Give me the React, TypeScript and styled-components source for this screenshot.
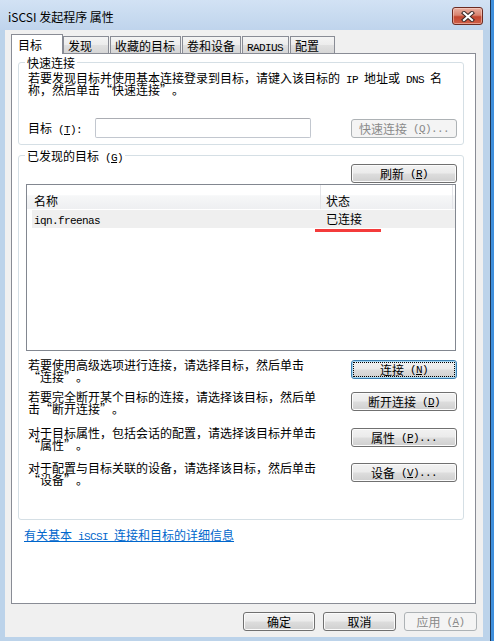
import React from "react";
import styled, { createGlobalStyle, css } from "styled-components";

const GlobalStyle = createGlobalStyle`
  * { box-sizing: border-box; }
  html, body { margin: 0; padding: 0; }
  body {
    background: #3f8fdc;
    font-family: "Noto Sans CJK SC", sans-serif;
    font-size: 12px;
    line-height: 12px;
    color: #000;
  }
`;

const Window = styled.div`
  width: 491px;
  height: 641px;
  border-right: 1px solid #1f3652;
  background: #bcd3ea;
  display: flex;
  flex-direction: column;
`;

const TitleBar = styled.div`
  height: 30px;
  flex: none;
  display: flex;
  align-items: flex-start;
  justify-content: space-between;
  padding: 0 7px 0 8px;
  background: linear-gradient(#d2e2f4, #bfd4ec);
`;

const Title = styled.div`
  margin-top: 10px;
  height: 13px;
  line-height: 13px;
`;

const CloseButton = styled.div`
  margin-top: 7px;
  width: 31px;
  height: 18px;
  border: 1px solid #6b2b22;
  border-radius: 3px;
  background: linear-gradient(#e9b0a2 0%, #d8836f 45%, #c3462f 55%, #cf5f48 100%);
  box-shadow: inset 0 0 0 1px rgba(255, 220, 210, 0.5);
  display: flex;
  align-items: center;
  justify-content: center;
`;

const Client = styled.div`
  flex: 1;
  width: 478px;
  margin: 0 0 4px 5px;
  padding: 4px 0 0 6px;
  background: #f0f0f0;
  display: flex;
  flex-direction: column;
`;

const TabStrip = styled.div`
  display: flex;
  align-items: flex-end;
`;

const Tab = styled.div<{ $w: number; $active?: boolean }>`
  position: relative;
  width: ${(p) => p.$w}px;
  border: 1px solid #898c95;
  border-bottom: none;
  white-space: nowrap;
  ${(p) =>
    p.$active
      ? css`
          z-index: 1;
          height: 20px;
          margin-bottom: -1px;
          padding: 4px 0 0 6px;
          background: #fff;
        `
      : css`
          height: 17px;
          margin-right: 1px;
          padding: 3px 0 0 4px;
          background: linear-gradient(#f4f4f4 0%, #ececec 50%, #e0e0e0 51%, #d6d6d6 100%);
        `}
`;

const Panel = styled.div`
  width: 465px;
  height: 551px;
  border: 1px solid #898c95;
  background: #fff;
  display: flex;
  flex-direction: column;
`;

const Group = styled.fieldset<{ $mt: number; $pt: number; $pb: number }>`
  margin: ${(p) => p.$mt}px 11px 0 6px;
  padding: ${(p) => p.$pt}px 6px ${(p) => p.$pb}px 7px;
  border: 1px solid #d5dfe5;
  border-radius: 3px;
  min-width: 0;
`;

const Legend = styled.legend`
  padding: 0 2px;
  margin-left: -1px;
  height: 13px;
  line-height: 13px;
  white-space: nowrap;
`;

const Para = styled.div`
  margin-left: 2px;
`;

const Line = styled.div`
  height: 12px;
  line-height: 12px;
  white-space: nowrap;
`;

const FieldRow = styled.div`
  display: flex;
  align-items: flex-start;
  margin-top: 22px;
  margin-left: 2px;
`;

const FieldLabel = styled.div`
  width: 67px;
  height: 12px;
  margin-top: 4px;
  white-space: nowrap;
`;

const TextInput = styled.div`
  width: 216px;
  height: 20px;
  border: 1px solid #c2c7cf;
  border-top-color: #abadb3;
  border-radius: 2px;
  background: #fff;
`;

const Spacer = styled.div`
  flex: 1;
`;

const Button = styled.div<{ $w: number; $disabled?: boolean; $focus?: boolean; $mt?: number }>`
  flex: none;
  width: ${(p) => p.$w}px;
  height: 19px;
  margin-top: ${(p) => p.$mt ?? 0}px;
  border: 1px solid #707070;
  border-radius: 3px;
  background: linear-gradient(#f2f2f2 0%, #ebebeb 48%, #dddddd 52%, #cfcfcf 100%);
  box-shadow: inset 0 0 0 1px #fbfbfb;
  display: flex;
  align-items: center;
  justify-content: center;
  white-space: nowrap;
  line-height: 12px;
  ${(p) =>
    p.$disabled &&
    css`
      border-color: #adb2b5;
      background: #f4f4f4;
      box-shadow: none;
      color: #8a8a8a;
    `}
  ${(p) =>
    p.$focus &&
    css`
      border-color: #3c7fb1;
      box-shadow: inset 0 0 0 1px #a7d9f5;
      outline: 1px dotted #000;
      outline-offset: -3px;
    `}
`;

const TopRight = styled.div`
  display: flex;
  justify-content: flex-end;
`;

const ListBox = styled.div`
  position: relative;
  width: 430px;
  height: 167px;
  margin-top: 1px;
  border: 1px solid #828790;
  background: #fff;
`;

const ListHeader = styled.div`
  display: flex;
  height: 24px;
  background: linear-gradient(#ffffff 0%, #ffffff 40%, #f6f7f8 45%, #eeeff1 100%);
`;

const HeaderCell = styled.div<{ $w: number; $pl: number }>`
  width: ${(p) => p.$w}px;
  padding: 10px 0 0 ${(p) => p.$pl}px;
  border-right: 1px solid #e3e4e8;
`;

const ListRow = styled.div`
  display: flex;
  height: 18px;
  margin: 1px 0 0 5px;
  background: #efefef;
  align-items: center;
`;

const Cell = styled.div<{ $w: number; $pl: number }>`
  width: ${(p) => p.$w}px;
  height: 12px;
  padding-left: ${(p) => p.$pl}px;
  white-space: nowrap;
`;

const Mark = styled.div`
  position: absolute;
  left: 288px;
  top: 44px;
  width: 66px;
  height: 3px;
  background: #f43b3b;
`;

const ActionRow = styled.div<{ $mt: number }>`
  display: flex;
  align-items: flex-start;
  justify-content: space-between;
  margin-top: ${(p) => p.$mt}px;
`;

const Link = styled.a`
  display: block;
  height: 12px;
  margin: 9px 0 0 12px;
  align-self: flex-start;
  color: #0066cc;
  text-decoration: underline;
  white-space: nowrap;
  line-height: 12px;
`;

const Footer = styled.div`
  display: flex;
  justify-content: flex-end;
  gap: 8px;
  padding: 8px 6px 0 0;
`;

const L = styled.span`
  font-family: "Liberation Mono", monospace;
  font-size: 11px;
  letter-spacing: -0.6px;
  line-height: 10px;
  white-space: pre;
`;

const Q = styled.span<{ $open?: boolean }>`
  display: inline-block;
  width: 12px;
  line-height: 12px;
  vertical-align: baseline;
  text-align: ${(p) => (p.$open ? "right" : "left")};
`;

const Key: React.FC<{ k: string; tail?: string }> = ({ k, tail = "" }) => (
  <L>
    {" ("}
    <u>{k}</u>
    {")" + tail}
  </L>
);

const Quoted: React.FC<{ children: React.ReactNode }> = ({ children }) => (
  <>
    <Q $open>“</Q>
    {children}
    <Q>”</Q>
  </>
);

const actions: { lines: [React.ReactNode, React.ReactNode]; label: string; k: string; tail?: string; mt: number; focus?: boolean }[] = [
  {
    lines: ["若要使用高级选项进行连接，请选择目标，然后单击", <><Quoted>连接</Quoted>。</>],
    label: "连接",
    k: "N",
    mt: 8,
    focus: true,
  },
  {
    lines: ["若要完全断开某个目标的连接，请选择该目标，然后单", <>击<Quoted>断开连接</Quoted>。</>],
    label: "断开连接",
    k: "D",
    mt: 8,
  },
  {
    lines: ["对于目标属性，包括会话的配置，请选择该目标并单击", <><Quoted>属性</Quoted>。</>],
    label: "属性",
    k: "P",
    tail: "...",
    mt: 12,
  },
  {
    lines: ["对于配置与目标关联的设备，请选择该目标，然后单击", <><Quoted>设备</Quoted>。</>],
    label: "设备",
    k: "V",
    tail: "...",
    mt: 11,
  },
];

export default function App() {
  return (
    <>
      <GlobalStyle />
      <Window lang="zh-CN">
        <TitleBar>
          <Title>iSCSI 发起程序 属性</Title>
          <CloseButton>
            <svg width="14" height="11" viewBox="0 0 14 11">
              <path d="M3 2 L11 9 M11 2 L3 9" stroke="#3b2a28" strokeWidth="4.2" strokeLinecap="square" />
              <path d="M3 2 L11 9 M11 2 L3 9" stroke="#ffffff" strokeWidth="2.2" strokeLinecap="square" />
            </svg>
          </CloseButton>
        </TitleBar>
        <Client>
          <TabStrip>
            <Tab $w={52} $active>目标</Tab>
            <Tab $w={46}>发现</Tab>
            <Tab $w={71}>收藏的目标</Tab>
            <Tab $w={59}>卷和设备</Tab>
            <Tab $w={47}>
              <L>RADIUS</L>
            </Tab>
            <Tab $w={45}>配置</Tab>
          </TabStrip>
          <Panel>
            <Group $mt={2} $pt={3} $pb={6}>
              <Legend>快速连接</Legend>
              <Para>
                <Line>
                  若要发现目标并使用基本连接登录到目标，请键入该目标的<L> IP </L>地址或<L> DNS </L>名
                </Line>
                <Line>
                  称，然后单击<Quoted>快速连接</Quoted>。
                </Line>
              </Para>
              <FieldRow>
                <FieldLabel>
                  目标<Key k="T" tail=":" />
                </FieldLabel>
                <TextInput />
                <Spacer />
                <Button $w={106} $mt={1} $disabled>
                  快速连接<Key k="Q" tail="..." />
                </Button>
              </FieldRow>
            </Group>
            <Group $mt={4} $pt={2} $pb={33}>
              <Legend>
                已发现的目标<Key k="G" />
              </Legend>
              <TopRight>
                <Button $w={106}>
                  刷新<Key k="R" />
                </Button>
              </TopRight>
              <ListBox>
                <ListHeader>
                  <HeaderCell $w={294} $pl={7}>名称</HeaderCell>
                  <HeaderCell $w={132} $pl={5}>状态</HeaderCell>
                </ListHeader>
                <ListRow>
                  <Cell $w={289} $pl={2}>
                    <L>iqn.freenas</L>
                  </Cell>
                  <Cell $w={132} $pl={5}>已连接</Cell>
                </ListRow>
                <Mark />
              </ListBox>
              {actions.map((a) => (
                <ActionRow key={a.k} $mt={a.mt}>
                  <Para>
                    <Line>{a.lines[0]}</Line>
                    <Line>{a.lines[1]}</Line>
                  </Para>
                  <Button $w={106} $mt={1} $focus={a.focus}>
                    {a.label}
                    <Key k={a.k} tail={a.tail} />
                  </Button>
                </ActionRow>
              ))}
            </Group>
            <Link>
              有关基本<L> iSCSI </L>连接和目标的详细信息
            </Link>
          </Panel>
          <Footer>
            <Button $w={72}>确定</Button>
            <Button $w={73}>取消</Button>
            <Button $w={73} $disabled>
              应用<Key k="A" />
            </Button>
          </Footer>
        </Client>
      </Window>
    </>
  );
}
